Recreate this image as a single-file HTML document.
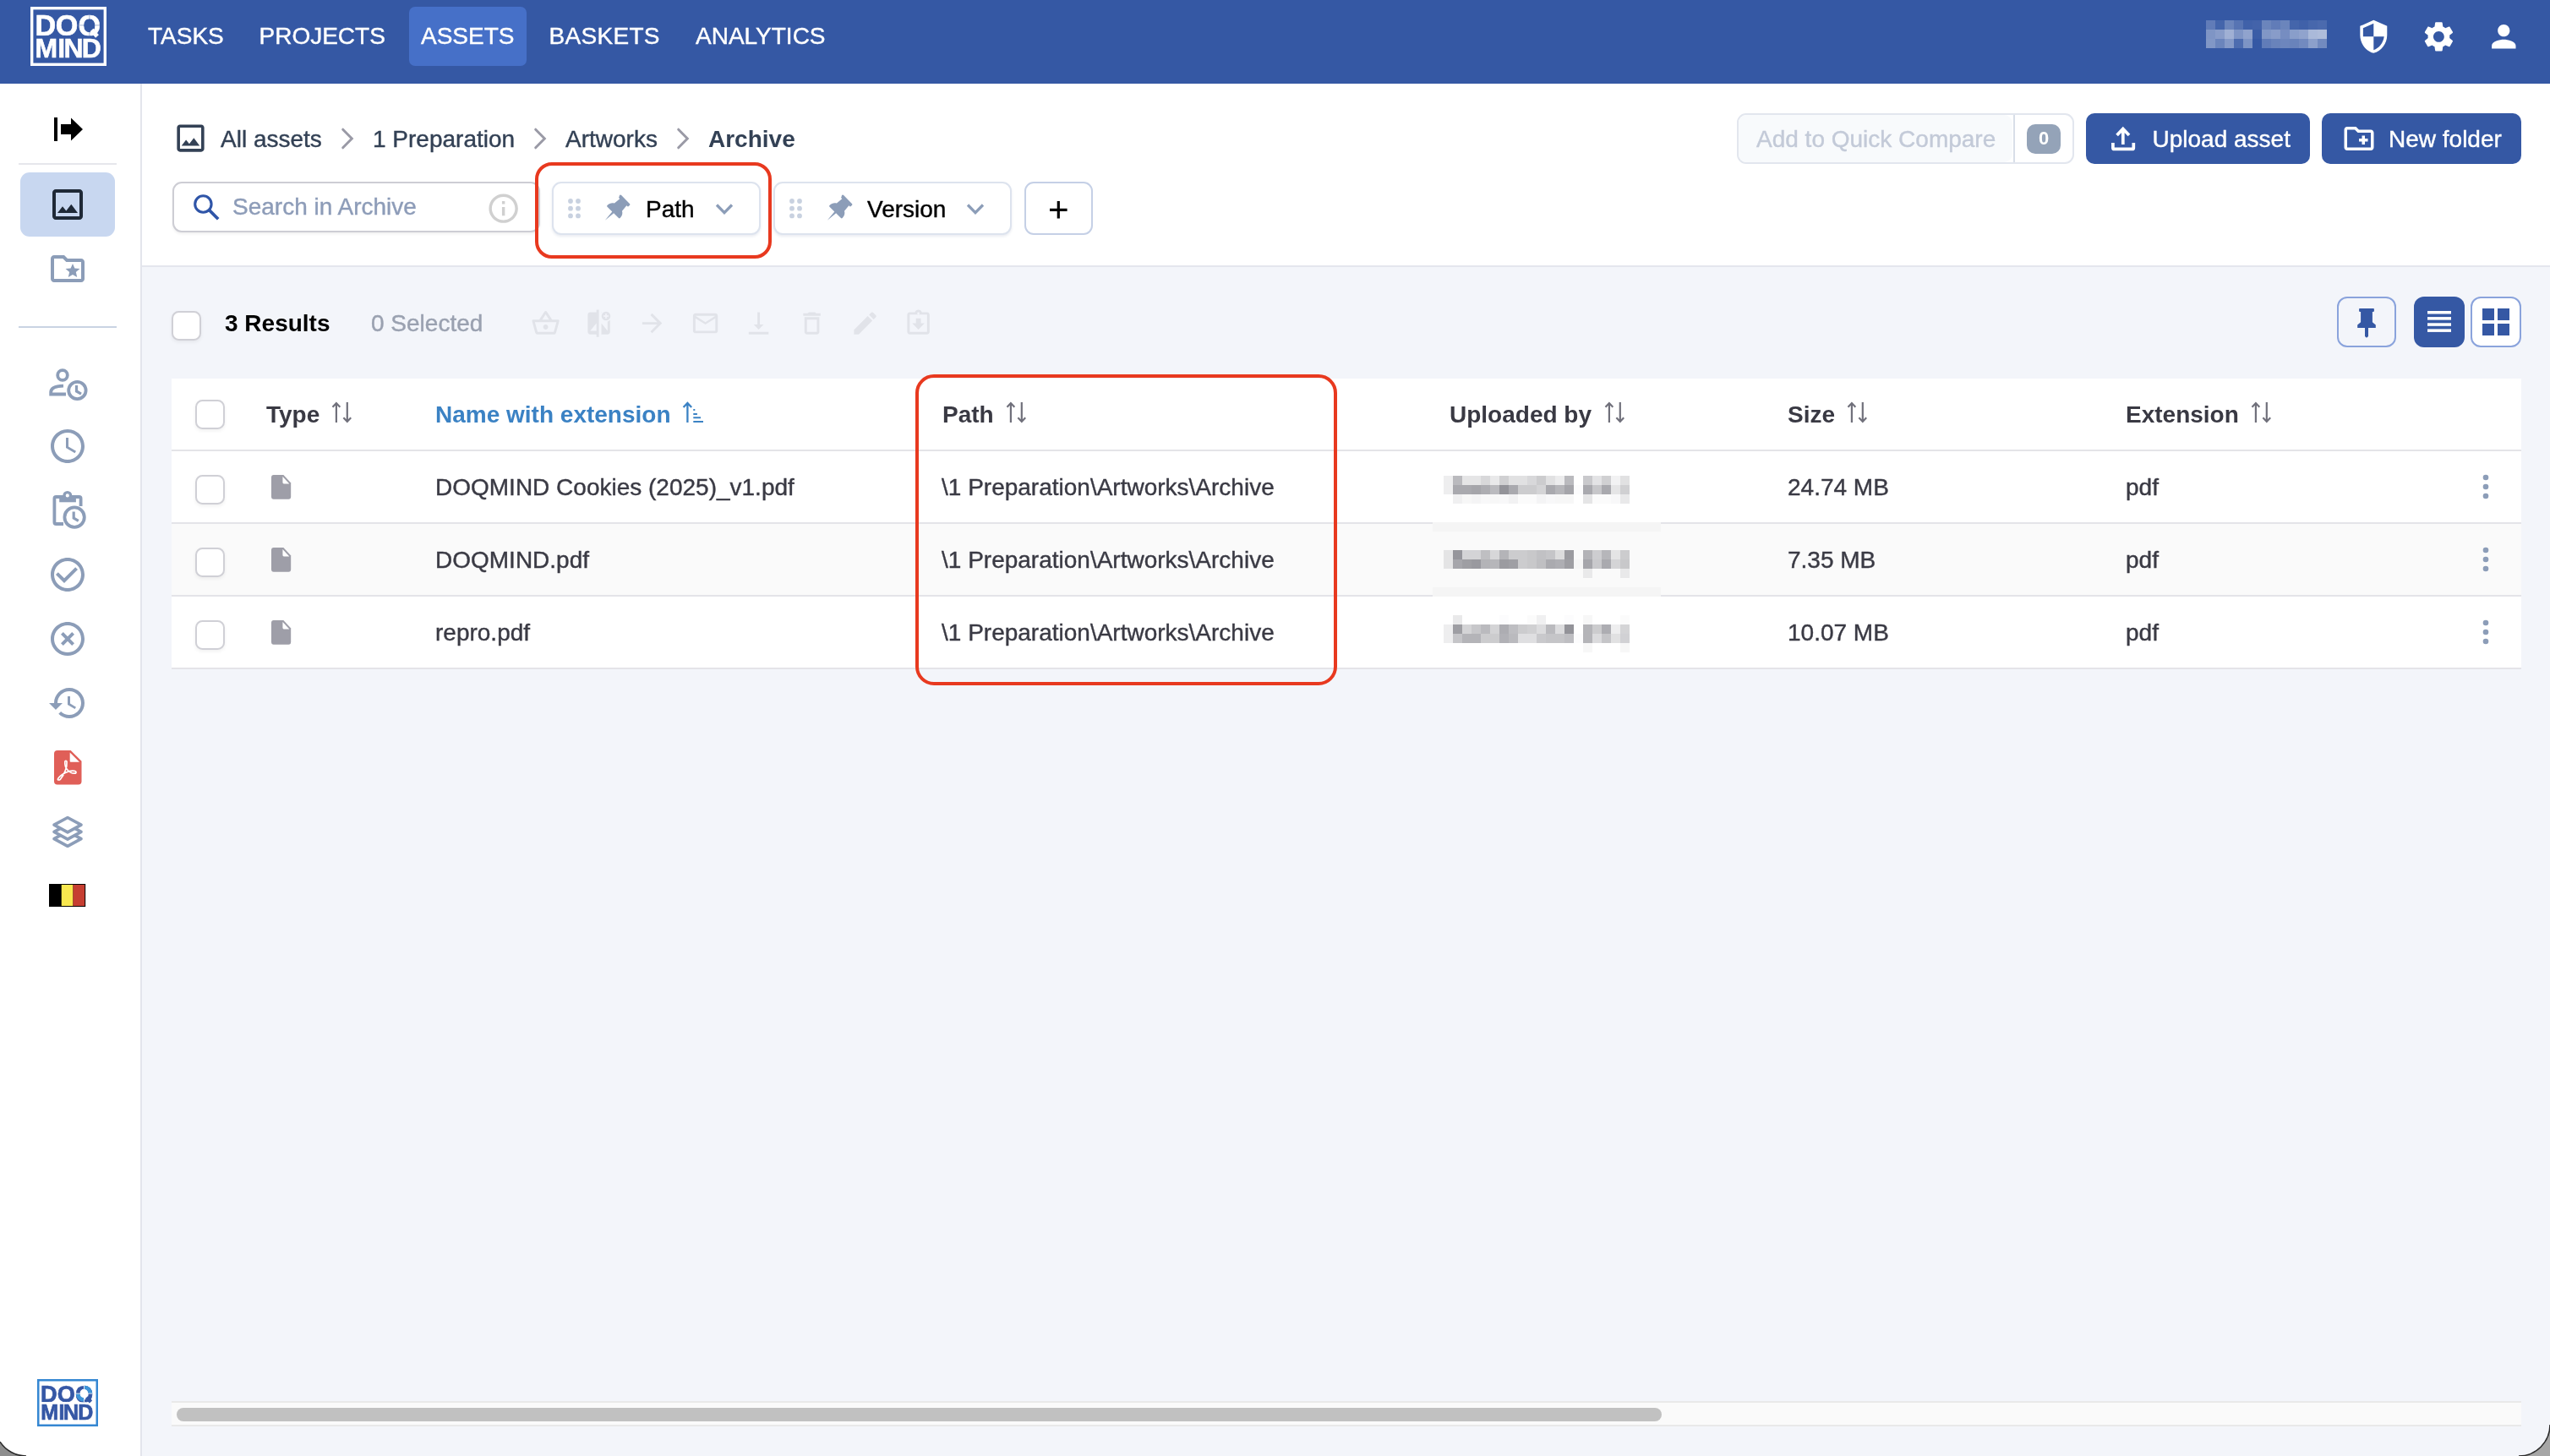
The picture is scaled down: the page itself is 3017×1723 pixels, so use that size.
<!DOCTYPE html>
<html lang="en">
<head>
<meta charset="utf-8">
<title>DOQMIND Assets</title>
<style>
*{box-sizing:border-box;margin:0;padding:0}
html,body{width:3017px;height:1723px;overflow:hidden;background:#f3f5fa}
body{position:relative;will-change:transform;font-family:"Liberation Sans",Arial,sans-serif;font-size:28px;line-height:32px;color:#3a3a44}
.a{position:absolute}
.t{position:absolute;white-space:nowrap;font-size:28px;line-height:32px}
.t{-webkit-text-stroke:.400px currentColor}
.b{font-weight:bold;-webkit-text-stroke:0}
svg{position:absolute;overflow:visible}
#hdr{left:0;top:0;width:3017px;height:99px;background:#3558a4}
#hdr .t{color:#fff}
#side{left:0;top:99px;width:168px;height:1624px;background:#fff;border-right:2px solid #e3e5ec}
#tool{left:168px;top:99px;width:2849px;height:217px;background:#fff;border-bottom:2px solid #e4e6ee}
.cb{position:absolute;width:35px;height:35px;border:2px solid #d0d0d6;border-radius:8.500px;background:#fff;box-shadow:0 2px 4px rgba(0,0,0,.06)}
.chip{position:absolute;height:63px;border:2px solid #dde3ee;border-radius:11px;background:#fff;box-shadow:0 2px 3px rgba(60,80,130,.10)}
.btn{position:absolute;height:60px;border-radius:10px;background:#3558a4}
.row{position:absolute;left:203px;width:2780px;border-bottom:2px solid #e4e4e8;background:#fff}
.hl{position:absolute;border:4px solid #e8391f;border-radius:22px}
</style>
</head>
<body>

<!-- ================= HEADER ================= -->
<div id="hdr" class="a">
  <svg style="left:36px;top:8px" width="90" height="70" viewBox="0 0 90 70">
    <defs><clipPath id="qc1"><rect x="0" y="0" width="90" height="34.300"/></clipPath></defs>
    <rect x="1.700" y="1.700" width="86.600" height="66.600" fill="none" stroke="#fff" stroke-width="3.400"/>
    <text clip-path="url(#qc1)" x="5.500 29.800 56.600" y="33.500" font-family="Liberation Sans, sans-serif" font-weight="bold" font-size="34.200" fill="#fff" stroke="#fff" stroke-width=".600">DOQ</text>
    <path d="M72.500 27.500l6.500 7.500" stroke="#fff" stroke-width="5" fill="none"/>
    <path d="M69.800 9.500v6M69.800 28v6M58 21.800h6M76 21.800h6" stroke="#3558a4" stroke-opacity=".35" stroke-width="1.200" fill="none"/>
    <text x="5.600 32.300 39.400 60.700" y="60.100" font-family="Liberation Sans, sans-serif" font-weight="bold" font-size="32" fill="#fff" stroke="#fff" stroke-width=".600">MIND</text>
  </svg>
  <div class="a" style="left:484px;top:8px;width:139px;height:70px;border-radius:7px;background:#4670c8"></div>
  <div class="t" style="left:175px;top:27px">TASKS</div>
  <div class="t" style="left:306.500px;top:27px">PROJECTS</div>
  <div class="t" style="left:498px;top:27px">ASSETS</div>
  <div class="t" style="left:649.500px;top:27px;letter-spacing:.3px">BASKETS</div>
  <div class="t" style="left:823px;top:27px">ANALYTICS</div>

  <!-- blurred user name -->
  <svg id="uname" style="left:2610px;top:24px" width="143" height="33" viewBox="0 0 143 33" shape-rendering="crispEdges">
    <rect x="0" y="0" width="11" height="11" fill="#fff" fill-opacity="0.22"/>
    <rect x="11" y="0" width="11" height="11" fill="#fff" fill-opacity="0.08"/>
    <rect x="22" y="0" width="11" height="11" fill="#fff" fill-opacity="0.27"/>
    <rect x="33" y="0" width="11" height="11" fill="#fff" fill-opacity="0.17"/>
    <rect x="44" y="0" width="11" height="11" fill="#fff" fill-opacity="0.06"/>
    <rect x="55" y="0" width="11" height="11" fill="#fff" fill-opacity="0.07"/>
    <rect x="66" y="0" width="11" height="11" fill="#fff" fill-opacity="0.27"/>
    <rect x="77" y="0" width="11" height="11" fill="#fff" fill-opacity="0.22"/>
    <rect x="88" y="0" width="11" height="11" fill="#fff" fill-opacity="0.27"/>
    <rect x="99" y="0" width="11" height="11" fill="#fff" fill-opacity="0.08"/>
    <rect x="110" y="0" width="11" height="11" fill="#fff" fill-opacity="0.06"/>
    <rect x="121" y="0" width="11" height="11" fill="#fff" fill-opacity="0.09"/>
    <rect x="132" y="0" width="11" height="11" fill="#fff" fill-opacity="0.11"/>
    <rect x="0" y="11" width="11" height="11" fill="#fff" fill-opacity="0.37"/>
    <rect x="11" y="11" width="11" height="11" fill="#fff" fill-opacity="0.41"/>
    <rect x="22" y="11" width="11" height="11" fill="#fff" fill-opacity="0.53"/>
    <rect x="33" y="11" width="11" height="11" fill="#fff" fill-opacity="0.37"/>
    <rect x="44" y="11" width="11" height="11" fill="#fff" fill-opacity="0.45"/>
    <rect x="55" y="11" width="11" height="11" fill="#fff" fill-opacity="0.03"/>
    <rect x="66" y="11" width="11" height="11" fill="#fff" fill-opacity="0.38"/>
    <rect x="77" y="11" width="11" height="11" fill="#fff" fill-opacity="0.41"/>
    <rect x="88" y="11" width="11" height="11" fill="#fff" fill-opacity="0.32"/>
    <rect x="99" y="11" width="11" height="11" fill="#fff" fill-opacity="0.42"/>
    <rect x="110" y="11" width="11" height="11" fill="#fff" fill-opacity="0.45"/>
    <rect x="121" y="11" width="11" height="11" fill="#fff" fill-opacity="0.58"/>
    <rect x="132" y="11" width="11" height="11" fill="#fff" fill-opacity="0.60"/>
    <rect x="0" y="22" width="11" height="11" fill="#fff" fill-opacity="0.38"/>
    <rect x="11" y="22" width="11" height="11" fill="#fff" fill-opacity="0.27"/>
    <rect x="22" y="22" width="11" height="11" fill="#fff" fill-opacity="0.40"/>
    <rect x="33" y="22" width="11" height="11" fill="#fff" fill-opacity="0.12"/>
    <rect x="44" y="22" width="11" height="11" fill="#fff" fill-opacity="0.36"/>
    <rect x="66" y="22" width="11" height="11" fill="#fff" fill-opacity="0.22"/>
    <rect x="77" y="22" width="11" height="11" fill="#fff" fill-opacity="0.26"/>
    <rect x="88" y="22" width="11" height="11" fill="#fff" fill-opacity="0.28"/>
    <rect x="99" y="22" width="11" height="11" fill="#fff" fill-opacity="0.26"/>
    <rect x="110" y="22" width="11" height="11" fill="#fff" fill-opacity="0.30"/>
    <rect x="121" y="22" width="11" height="11" fill="#fff" fill-opacity="0.43"/>
    <rect x="132" y="22" width="11" height="11" fill="#fff" fill-opacity="0.30"/>
  </svg>
  <!-- shield -->
  <svg style="left:2786.7px;top:21.7px" width="42.6" height="42.6" viewBox="0 0 24 24"><path fill="#fff" d="M12 1L3 5v6c0 5.550 3.840 10.740 9 12 5.160-1.260 9-6.450 9-12V5l-9-4zm0 10.990h7c-.530 4.120-3.280 7.790-7 8.940V12H5V6.300l7-3.110v8.800z"/></svg>
  <!-- gear -->
  <svg style="left:2863.5px;top:21.5px" width="42.800" height="42.800" viewBox="0 0 24 24"><path fill="#fff" d="M19.140 12.940c.040-.300.060-.610.060-.940 0-.320-.020-.640-.070-.940l2.030-1.580c.180-.140.230-.410.120-.610l-1.920-3.320c-.120-.220-.370-.290-.590-.220l-2.390.960c-.500-.380-1.030-.700-1.620-.940l-.360-2.540c-.040-.240-.240-.410-.480-.410h-3.840c-.240 0-.430.170-.470.410l-.360 2.540c-.590.240-1.130.570-1.620.940l-2.390-.960c-.220-.080-.470 0-.590.220L2.740 8.870c-.120.210-.080.470.120.610l2.030 1.580c-.050.300-.090.630-.090.940s.020.640.070.940l-2.030 1.580c-.180.140-.230.410-.120.610l1.920 3.320c.120.220.370.290.590.220l2.390-.960c.500.380 1.030.700 1.620.940l.360 2.540c.050.240.240.410.480.410h3.840c.240 0 .440-.170.470-.410l.360-2.540c.590-.240 1.130-.560 1.620-.940l2.390.960c.220.080.470 0 .590-.220l1.920-3.320c.120-.220.070-.470-.120-.610l-2.010-1.580zM12 15.600c-1.980 0-3.600-1.620-3.600-3.600s1.620-3.600 3.600-3.600 3.600 1.620 3.600 3.600-1.620 3.600-3.600 3.600z"/></svg>
  <!-- person -->
  <svg style="left:2940.5px;top:21.7px" width="42.6" height="42.6" viewBox="0 0 24 24"><path fill="#fff" d="M12 12c2.210 0 4-1.790 4-4s-1.790-4-4-4-4 1.790-4 4 1.790 4 4 4zm0 2c-2.670 0-8 1.340-8 4v2h16v-2c0-2.660-5.330-4-8-4z"/></svg>
</div>

<!-- ================= SIDEBAR ================= -->
<div id="side" class="a">
  <!-- collapse arrow -->
  <svg style="left:60px;top:36px" width="44" height="36" viewBox="0 0 44 36"><rect x="4" y="4" width="4" height="28" fill="#000"/><path fill="#000" d="M12 12h12V4.500L38 18 24 31.500V24H12z"/></svg>
  <div class="a" style="left:22px;top:94px;width:116px;height:2px;background:#e6e7ec"></div>
  <!-- active: assets -->
  <div class="a" style="left:24px;top:105px;width:112px;height:76px;border-radius:11px;background:#c8d7f0"></div>
  <svg style="left:56px;top:119px" width="48" height="48" viewBox="0 0 24 24"><path fill="#1f2937" d="M19 5v14H5V5h14m0-2H5c-1.100 0-2 .900-2 2v14c0 1.100.900 2 2 2h14c1.100 0 2-.900 2-2V5c0-1.100-.900-2-2-2zm-4.860 8.860l-3 3.870L9 13.140 6 17h12l-3.860-5.140z"/></svg>
  <!-- folder special -->
  <svg style="left:56px;top:195px" width="48" height="48" viewBox="0 0 24 24"><path fill="#8c9db8" d="M20 6h-8l-2-2H4c-1.100 0-2 .900-2 2v12c0 1.100.900 2 2 2h16c1.100 0 2-.900 2-2V8c0-1.100-.900-2-2-2zm0 12H4V6h5.170l2 2H20v10zm-6.920-3.960L12.390 17 15 15.470 17.610 17l-.690-2.960 2.300-1.990-3.030-.260L15 9l-1.190 2.790-3.030.260z"/></svg>
  <div class="a" style="left:22px;top:286.500px;width:116px;height:2px;background:#c9d3e3"></div>
  <!-- person + clock -->
  <svg style="left:56px;top:334.200px" width="52" height="46" viewBox="0 0 52 46" fill="none" stroke="#8c9db8" stroke-width="3.800">
    <circle cx="18" cy="11" r="5.800"/>
    <path d="M22 33.500H4.200v-2.500C4.200 26 11 23.800 19 23.600"/>
    <circle cx="35.400" cy="29" r="10.200"/>
    <path d="M34.500 23v7l5.500 3.200" stroke-width="3.200"/>
  </svg>
  <!-- clock -->
  <svg style="left:56px;top:405px" width="48" height="48" viewBox="0 0 24 24"><path fill="#8c9db8" d="M11.990 2C6.470 2 2 6.480 2 12s4.470 10 9.990 10C17.520 22 22 17.520 22 12S17.520 2 11.990 2zM12 20c-4.420 0-8-3.580-8-8s3.580-8 8-8 8 3.580 8 8-3.580 8-8 8zm.5-13H11v6l5.250 3.150.750-1.230-4.500-2.670z"/></svg>
  <!-- clipboard + clock -->
  <svg style="left:58px;top:480px" width="48" height="48" viewBox="0 0 48 48" fill="none" stroke="#8c9db8" stroke-width="3.800">
    <path d="M17 41H8.400a2 2 0 0 1-2-2V11a2 2 0 0 1 2-2h27.200a2 2 0 0 1 2 2v9"/>
    <path d="M12.200 8.500h19.700v6.800H12.200z" fill="#8c9db8" stroke="none"/>
    <circle cx="21.800" cy="7.400" r="3.800" fill="#fff" stroke-width="3.400"/>
    <circle cx="30.100" cy="33.100" r="11.700" fill="#fff"/>
    <path d="M29.200 26.500v7.500l5.600 3.400" stroke-width="3.200"/>
  </svg>
  <!-- check circle -->
  <svg style="left:56px;top:556.500px" width="48" height="48" viewBox="0 0 24 24"><path fill="#8c9db8" d="M16.590 7.580L10 14.170l-3.590-3.580L5 12l5 5 8-8zM12 2C6.480 2 2 6.480 2 12s4.480 10 10 10 10-4.480 10-10S17.520 2 12 2zm0 18c-4.420 0-8-3.580-8-8s3.580-8 8-8 8 3.580 8 8-3.580 8-8 8z"/></svg>
  <!-- x circle -->
  <svg style="left:56px;top:633px" width="48" height="48" viewBox="0 0 24 24"><path fill="#8c9db8" d="M14.590 8L12 10.590 9.410 8 8 9.410 10.590 12 8 14.590 9.410 16 12 13.410 14.590 16 16 14.590 13.410 12 16 9.410 14.590 8zM12 2C6.470 2 2 6.470 2 12s4.470 10 10 10 10-4.470 10-10S17.530 2 12 2zm0 18c-4.410 0-8-3.590-8-8s3.590-8 8-8 8 3.590 8 8-3.590 8-8 8z"/></svg>
  <!-- history -->
  <svg style="left:56px;top:709px" width="48" height="48" viewBox="0 0 24 24"><path fill="#8c9db8" d="M13 3c-4.970 0-9 4.030-9 9H1l3.890 3.890.070.140L9 12H6c0-3.870 3.130-7 7-7s7 3.130 7 7-3.130 7-7 7c-1.930 0-3.680-.790-4.940-2.060l-1.420 1.420C8.270 19.990 10.510 21 13 21c4.970 0 9-4.030 9-9s-4.030-9-9-9zm-1 5v5l4.280 2.540.720-1.210-3.500-2.080V8H12z"/></svg>
  <!-- pdf -->
  <svg style="left:63.800px;top:789px" width="32.500" height="40.400" viewBox="0 0 33 41">
    <path fill="#e05f58" d="M4 0h16l13 13v24a4 4 0 0 1-4 4H4a4 4 0 0 1-4-4V4a4 4 0 0 1 4-4z"/>
    <path fill="#fff" d="M19 2.500v10.500a1 1 0 0 0 1 1h10.500z"/>
    <path fill="none" stroke="#fff" stroke-width="1.700" stroke-linecap="round" stroke-linejoin="round" d="M4.500 34.500c1.500-3 5-5.500 9-7.500 3.500-1.800 8-2.800 11-2.200 2.500.6 2.600 2.600.400 2.800-3 .200-6.800-1.700-9.300-4.800-2-2.500-2.800-6-2.600-9 .100-1.800 2.100-1.900 2.300 0 .300 3-.400 7-2 11-1.400 3.600-3.500 7.500-5.700 9.800-1.500 1.500-3.600 1-3.100-.100z"/>
  </svg>
  <!-- layers -->
  <svg style="left:60px;top:864.700px" width="40" height="42" viewBox="0 0 40 42" fill="#fff" stroke="#8c9db8" stroke-width="3.600" stroke-linejoin="round">
    <path d="M20 19.9L36 28.6 20 37.3 4 28.6z"/>
    <path d="M20 11.7L36 20.4 20 29.1 4 20.4z"/>
    <path d="M20 3.5L36 12.2 20 20.9 4 12.2z"/>
  </svg>
  <!-- flag -->
  <svg style="left:58.400px;top:946.600px" width="43.200" height="27" viewBox="0 0 44 28" preserveAspectRatio="none"><rect x="0" y="0" width="44" height="28" fill="#000"/><rect x="15" y="1" width="14" height="26" fill="#f9e84f"/><rect x="29" y="1" width="14" height="26" fill="#c63e31"/></svg>
  <!-- bottom logo -->
  <svg style="left:44px;top:1533px" width="72" height="56" viewBox="0 0 72 56">
    <defs><clipPath id="qc2"><rect x="0" y="0" width="72" height="27.200"/></clipPath></defs>
    <rect x="1.250" y="1.250" width="69.500" height="53.500" fill="#fff" stroke="#3587d2" stroke-width="2.500"/>
    <text clip-path="url(#qc2)" x="4.100 23.800 45" y="26.500" font-family="Liberation Sans, sans-serif" font-weight="bold" font-size="27.200" fill="#3557a5" stroke="#3557a5" stroke-width=".700">DOQ</text>
    <path d="M55.500 9.700A7.400 7.400 0 0 1 62.900 17.100M55.500 24.500A7.400 7.400 0 0 1 48.100 17.100" fill="none" stroke="#3d94d8" stroke-width="4.600"/>
    <path d="M55.500 7v5.500M55.500 21.500v5.500M45.500 17.100h5.500M60 17.100h5.500" stroke="#fff" stroke-width=".800" fill="none"/>
    <path d="M58.500 21.500l5 5.500" stroke="#3557a5" stroke-width="4.400" fill="none"/>
    <text x="4.200 25.400 31 48.200" y="47.900" font-family="Liberation Sans, sans-serif" font-weight="bold" font-size="25" fill="#3557a5" stroke="#3557a5" stroke-width=".700">MIND</text>
  </svg>
</div>

<!-- ================= TOOLBAR ================= -->
<div id="tool" class="a"></div>

<!-- breadcrumb -->
<svg style="left:204.3px;top:142.3px" width="43" height="43" viewBox="0 0 24 24"><path fill="#334155" d="M19 5v14H5V5h14m0-2H5c-1.100 0-2 .900-2 2v14c0 1.100.900 2 2 2h14c1.100 0 2-.900 2-2V5c0-1.100-.900-2-2-2zm-4.860 8.860l-3 3.870L9 13.140 6 17h12l-3.860-5.140z"/></svg>
<div class="t" style="left:261px;top:149px;color:#334155">All assets</div>
<svg style="left:403px;top:151px" width="16" height="26" viewBox="0 0 16 26" fill="none" stroke="#9a9aa6" stroke-width="3" stroke-linecap="round"><path d="M2.700 2.200L13.300 13 2.700 23.800"/></svg>
<div class="t" style="left:441px;top:149px;color:#334155">1 Preparation</div>
<svg style="left:631px;top:151px" width="16" height="26" viewBox="0 0 16 26" fill="none" stroke="#9a9aa6" stroke-width="3" stroke-linecap="round"><path d="M2.700 2.200L13.300 13 2.700 23.800"/></svg>
<div class="t" style="left:669px;top:149px;color:#334155">Artworks</div>
<svg style="left:800px;top:151px" width="16" height="26" viewBox="0 0 16 26" fill="none" stroke="#9a9aa6" stroke-width="3" stroke-linecap="round"><path d="M2.700 2.200L13.300 13 2.700 23.800"/></svg>
<div class="t b" style="left:838px;top:149px;color:#334155">Archive</div>

<!-- quick compare / buttons -->
<div class="a" style="left:2055px;top:134px;width:399px;height:60px;border:2px solid #e2e6ee;border-radius:11px;background:#fff;overflow:hidden">
  <div class="a" style="left:0;top:0;width:324px;height:56px;background:#f8fafc;border-radius:0 10px 10px 0"></div>
  <div class="a" style="left:325px;top:0;width:2px;height:56px;background:#d8dee8"></div>
</div>
<div class="t" style="left:2078px;top:148.700px;color:#c3cad8">Add to Quick Compare</div>
<div class="a" style="left:2398px;top:147px;width:40px;height:35px;border-radius:10px;background:#94a3b8"></div>
<div class="t b" style="left:2398px;top:149px;width:40px;text-align:center;color:#fff;font-size:22px;line-height:30px">0</div>
<div class="btn" style="left:2468px;top:134px;width:265px"></div>
<svg style="left:2496px;top:146px" width="32" height="34" viewBox="0 0 32 34" fill="none" stroke="#fff" stroke-width="3.700"><path d="M3.900 22.900v6a1.500 1.500 0 0 0 1.500 1.500h21.400a1.500 1.500 0 0 0 1.500-1.500v-6"/><path d="M15.800 25.100V7.500M8.600 14l7.200-7.600 7.200 7.600"/></svg>
<div class="t" style="left:2546.500px;top:148.500px;color:#fff">Upload asset</div>
<div class="btn" style="left:2747px;top:134px;width:236px"></div>
<svg style="left:2770px;top:143px" width="42" height="42" viewBox="0 0 24 24"><path fill="#fff" d="M20 6h-8l-2-2H4c-1.110 0-1.990.890-1.990 2L2 18c0 1.110.890 2 2 2h16c1.110 0 2-.890 2-2V8c0-1.110-.890-2-2-2zm0 12H4V6h5.170l2 2H20v10zm-8-4h2v2h2v-2h2v-2h-2v-2h-2v2h-2z"/></svg>
<div class="t" style="left:2826px;top:148.500px;color:#fff">New folder</div>

<!-- search -->
<div class="a" style="left:203.500px;top:215px;width:435px;height:60px;border:2px solid #cdcdd4;border-radius:11px;background:#fff;box-shadow:0 2px 3px rgba(0,0,0,.06)"></div>
<svg style="left:226px;top:227px" width="38" height="38" viewBox="0 0 38 38" fill="none" stroke="#2f55a8"><circle cx="14.400" cy="14.500" r="9.700" stroke-width="3.100"/><path d="M21.300 21.400L32.200 32.300" stroke-width="3.700"/></svg>
<div class="t" style="left:275px;top:229px;color:#8d9cb8">Search in Archive</div>
<svg style="left:574.500px;top:226.100px" width="41.300" height="41.300" viewBox="0 0 24 24"><path fill="#d0d0d0" d="M11 7h2v2h-2zm0 4h2v6h-2zm1-9C6.480 2 2 6.480 2 12s4.480 10 10 10 10-4.480 10-10S17.520 2 12 2zm0 18c-4.410 0-8-3.590-8-8s3.590-8 8-8 8 3.590 8 8-3.590 8-8 8z"/></svg>

<!-- chips -->
<div class="chip" style="left:653px;top:215px;width:247px"></div>
<svg class="dots" style="left:671.9px;top:234.800px" width="15" height="24" viewBox="0 0 15 24" fill="#c8d1e0"><circle cx="3" cy="3" r="2.900"/><circle cx="12" cy="3" r="2.900"/><circle cx="3" cy="11.700" r="2.900"/><circle cx="12" cy="11.700" r="2.900"/><circle cx="3" cy="20.400" r="2.900"/><circle cx="12" cy="20.400" r="2.900"/></svg>
<svg style="left:740.3px;top:236.3px" width="1" height="1"><g transform="rotate(45) scale(1.000)"><path fill="#8c9db8" d="M-8.400 1.500a1.500 1.500 0 0 1 1.500-1.500h13.800a1.500 1.500 0 0 1 1.500 1.500v1.200a1.500 1.500 0 0 1-1.500 1.500h-.800l.700 8.300c2.600 1.300 4.300 4 4.300 7.600a1.200 1.200 0 0 1-1.200 1.200h-8.200l-1.300 13.300-1.300-13.300h-8.200a1.200 1.200 0 0 1-1.200-1.200c0-3.600 1.700-6.300 4.300-7.600l.700-8.300h-.800a1.500 1.500 0 0 1-1.500-1.500z"/></g></svg>
<div class="t" style="left:764px;top:232px;color:#000">Path</div>
<svg style="left:846px;top:240px" width="22" height="15" viewBox="0 0 22 15" fill="none" stroke="#8c9db8" stroke-width="3.300"><path d="M2 2.500L11 11.700 20 2.500"/></svg>

<div class="chip" style="left:915px;top:215px;width:282px"></div>
<svg class="dots" style="left:933.600px;top:234.800px" width="15" height="24" viewBox="0 0 15 24" fill="#c8d1e0"><circle cx="3" cy="3" r="2.900"/><circle cx="12" cy="3" r="2.900"/><circle cx="3" cy="11.700" r="2.900"/><circle cx="12" cy="11.700" r="2.900"/><circle cx="3" cy="20.400" r="2.900"/><circle cx="12" cy="20.400" r="2.900"/></svg>
<svg style="left:1003.0px;top:236.3px" width="1" height="1"><g transform="rotate(45) scale(1.000)"><path fill="#8c9db8" d="M-8.400 1.500a1.500 1.500 0 0 1 1.500-1.500h13.800a1.500 1.500 0 0 1 1.500 1.500v1.200a1.500 1.500 0 0 1-1.500 1.500h-.800l.700 8.300c2.600 1.300 4.300 4 4.300 7.600a1.200 1.200 0 0 1-1.200 1.200h-8.200l-1.300 13.300-1.300-13.300h-8.200a1.200 1.200 0 0 1-1.200-1.200c0-3.600 1.700-6.300 4.300-7.600l.700-8.300h-.800a1.500 1.500 0 0 1-1.500-1.500z"/></g></svg>
<div class="t" style="left:1026px;top:232px;color:#000">Version</div>
<svg style="left:1143px;top:240px" width="22" height="15" viewBox="0 0 22 15" fill="none" stroke="#8c9db8" stroke-width="3.300"><path d="M2 2.500L11 11.700 20 2.500"/></svg>

<div class="a" style="left:1212px;top:215px;width:81px;height:63px;border:2px solid #c5d0e6;border-radius:11px;background:#fff"></div>
<svg style="left:1242.300px;top:237.500px" width="20.600" height="20.600" viewBox="0 0 20.600 20.600" stroke="#000" stroke-width="3.200"><path d="M10.300 0v20.600M0 10.300h20.600"/></svg>

<!-- red highlight 1 -->
<div class="hl" style="left:633px;top:192px;width:280px;height:114px;border-radius:20px"></div>

<!-- ================= RESULTS BAR ================= -->
<div class="cb" style="left:203px;top:368px"></div>
<div class="t b" style="left:266px;top:367px;color:#000">3 Results</div>
<div class="t" style="left:439px;top:367px;color:#9aa1b0">0 Selected</div>
<svg style="left:627.9px;top:364.8px" width="35.2" height="35.2" viewBox="0 0 24 24"><path fill="#e1e3e9" d="M22 9h-4.790l-4.380-6.560c-.190-.280-.510-.420-.830-.420s-.640.140-.830.430L6.790 9H2c-.550 0-1 .450-1 1 0 .090.010.180.040.270l2.540 9.270c.230.840 1 1.460 1.920 1.460h13c.920 0 1.690-.620 1.930-1.460l2.540-9.270L23 10c0-.550-.450-1-1-1zM12 4.800L14.800 9H9.200L12 4.800zM18.500 19l-12.990.010L3.310 11H20.700l-2.200 8zM12 13c-1.100 0-2 .900-2 2s.900 2 2 2 2-.900 2-2-.900-2-2-2z"/></svg>
<svg style="left:690.7px;top:364.9px" width="35.2" height="35.2" viewBox="0 0 24 24"><path fill="#e1e3e9" d="M10 3H5c-1.100 0-2 .900-2 2v14c0 1.100.900 2 2 2h5v2h2V1h-2v2zm0 15H5l5-6v6zm9-15h-5v2h5v13l-5-6v9h5c1.100 0 2-.900 2-2V5c0-1.100-.900-2-2-2z"/></svg>
<svg style="left:710px;top:367px" width="14" height="14" viewBox="0 0 14 14"><circle cx="7" cy="7" r="6" fill="#e1e3e9" stroke="#f3f5fa" stroke-width="1.400"/><path d="M7 4v6M4 7h6" stroke="#f3f5fa" stroke-width="1.500"/></svg>
<svg style="left:753.9px;top:364.9px" width="35.2" height="35.2" viewBox="0 0 24 24"><path fill="#e1e3e9" d="M12 4l-1.410 1.410L16.170 11H4v2h12.170l-5.580 5.590L12 20l8-8z"/></svg>
<svg style="left:816.9px;top:364.8px" width="35.2" height="35.2" viewBox="0 0 24 24"><path fill="#e1e3e9" d="M20 4H4c-1.100 0-1.990.900-1.990 2L2 18c0 1.100.900 2 2 2h16c1.100 0 2-.900 2-2V6c0-1.100-.900-2-2-2zm0 14H4V8l8 5 8-5v10zm-8-7L4 6h16l-8 5z"/></svg>
<svg style="left:879.8px;top:364.8px" width="35.2" height="35.2" viewBox="0 0 24 24"><path fill="#e1e3e9" d="M16 13h-3V3h-2v10H8l4 4 4-4zM4 19v2h16v-2H4z"/></svg>
<svg style="left:942.9px;top:364.8px" width="35.2" height="35.2" viewBox="0 0 24 24"><path fill="#e1e3e9" d="M6 19c0 1.100.900 2 2 2h8c1.100 0 2-.900 2-2V7H6v12zM8 9h8v10H8V9zm7.500-5l-1-1h-5l-1 1H5v2h14V4z"/></svg>
<svg style="left:1005.6px;top:364.8px" width="35.2" height="35.2" viewBox="0 0 24 24"><path fill="#e1e3e9" d="M3 17.250V21h3.750L17.810 9.940l-3.750-3.750L3 17.250zM20.710 7.040c.390-.390.390-1.020 0-1.410l-2.340-2.340c-.390-.390-1.020-.390-1.410 0l-1.830 1.830 3.750 3.750 1.830-1.830z"/></svg>
<svg style="left:1068.7px;top:365.0px" width="35.2" height="35.2" viewBox="0 0 24 24"><path fill="#e1e3e9" d="M19 3h-4.180C14.400 1.840 13.300 1 12 1c-1.300 0-2.400.840-2.820 2H5c-1.100 0-2 .900-2 2v14c0 1.100.900 2 2 2h14c1.100 0 2-.900 2-2V5c0-1.100-.900-2-2-2zm-7 0c.550 0 1 .450 1 1s-.450 1-1 1-1-.450-1-1 .450-1 1-1zm7 16H5V5h14v14zm-7-2l5-5h-3V8h-4v4H7z"/></svg>

<!-- view buttons -->
<div class="a" style="left:2765px;top:351px;width:70px;height:60px;border:2px solid #8aa3dc;border-radius:12px"></div>
<svg style="left:2799.900px;top:365px" width="1" height="1"><path fill="#3558a4" d="M-8.900 .800a.800 .800 0 0 1 .800-.800h16.200a.800 .800 0 0 1 .800 .800v2.300a.800 .800 0 0 1-.800 .800h-1.200v12.300l3.900 3.400v3.400h-8.800v10l-2 1.800-2-1.800v-10h-8.800v-3.400l3.900-3.400v-12.300h-1.200a.800 .800 0 0 1-.800-.800z"/></svg>
<div class="a" style="left:2856px;top:351px;width:60px;height:60px;border-radius:12px;background:#3558a4"></div>
<svg style="left:2872px;top:368.200px" width="28" height="25" viewBox="0 0 28 25" fill="#fff"><rect x="0" y="0" width="28" height="3.500"/><rect x="0" y="7.100" width="28" height="3.500"/><rect x="0" y="14.300" width="28" height="3.500"/><rect x="0" y="21.400" width="28" height="3.500"/></svg>
<div class="a" style="left:2923px;top:351px;width:60px;height:60px;border:2px solid #8aa3dc;border-radius:12px;background:#fff"></div>
<svg style="left:2937px;top:365px" width="32" height="32" viewBox="0 0 32 32" fill="#3558a4"><rect x="0" y="0" width="14" height="14"/><rect x="18" y="0" width="14" height="14"/><rect x="0" y="18" width="14" height="14"/><rect x="18" y="18" width="14" height="14"/></svg>

<!-- ================= TABLE ================= -->
<div class="row" style="top:448px;height:86px"></div>
<div class="row" style="top:534px;height:86px"></div>
<div class="row" style="top:620px;height:86px;background:#fafafa"></div>
<div class="row" style="top:706px;height:86px"></div>
<div class="a" style="left:1695px;top:618px;width:270px;height:88px;background:#fafafa;border-top:11px solid #f5f5f5;border-bottom:11px solid #f5f5f5"></div>

<div class="cb" style="left:231px;top:473px"></div>
<div class="t b" style="left:315px;top:475px;color:#393943">Type</div>
<svg style="left:391.600px;top:474px" width="24" height="28" viewBox="0 0 24 28" fill="none" stroke="#70707b" stroke-width="2.200"><path d="M5.900 26V3.300M1.500 7.700l4.400-4.700 4.400 4.700M18.800 2v22.700M14.400 20.300l4.400 4.700 4.400-4.700"/></svg>
<div class="t b" style="left:515px;top:475px;color:#3b82c4">Name with extension</div>
<svg style="left:807px;top:474px" width="26" height="28" viewBox="0 0 26 28" fill="none" stroke="#3b82c4" stroke-width="2.300"><path d="M6.400 26V3.300M1.600 8l4.800-5 4.800 5"/><path stroke-width="2" d="M13.300 10.900h2M13.300 15.900h4.600M13.300 20.300h8.700M13.300 25h11.700"/></svg>
<div class="t b" style="left:1115px;top:475px;color:#393943">Path</div>
<svg style="left:1190.300px;top:474px" width="24" height="28" viewBox="0 0 24 28" fill="none" stroke="#70707b" stroke-width="2.200"><path d="M5.900 26V3.300M1.500 7.700l4.400-4.700 4.400 4.700M18.800 2v22.700M14.400 20.300l4.400 4.700 4.400-4.700"/></svg>
<div class="t b" style="left:1715px;top:475px;color:#393943">Uploaded by</div>
<svg style="left:1898.4px;top:474px" width="24" height="28" viewBox="0 0 24 28" fill="none" stroke="#70707b" stroke-width="2.200"><path d="M5.900 26V3.300M1.500 7.700l4.400-4.700 4.400 4.700M18.800 2v22.700M14.400 20.300l4.400 4.700 4.400-4.700"/></svg>
<div class="t b" style="left:2115px;top:475px;color:#393943">Size</div>
<svg style="left:2184.500px;top:474px" width="24" height="28" viewBox="0 0 24 28" fill="none" stroke="#70707b" stroke-width="2.200"><path d="M5.900 26V3.300M1.500 7.700l4.400-4.700 4.400 4.700M18.800 2v22.700M14.400 20.300l4.400 4.700 4.400-4.700"/></svg>
<div class="t b" style="left:2515px;top:475px;color:#393943">Extension</div>
<svg style="left:2663.4px;top:474px" width="24" height="28" viewBox="0 0 24 28" fill="none" stroke="#70707b" stroke-width="2.200"><path d="M5.900 26V3.300M1.500 7.700l4.400-4.700 4.400 4.700M18.800 2v22.700M14.400 20.300l4.400 4.700 4.400-4.700"/></svg>
<div class="cb" style="left:231px;top:562px"></div>
<svg style="left:320.900px;top:562px" width="23.200" height="28.800" viewBox="0 0 25 29" preserveAspectRatio="none"><path fill="#9e9ea8" d="M3 0h12.500L25 9.500V26a3 3 0 0 1-3 3H3a3 3 0 0 1-3-3V3a3 3 0 0 1 3-3z"/><path fill="#fff" d="M14.500 2v7a1.500 1.500 0 0 0 1.500 1.500h7z"/></svg>
<div class="t" style="left:515px;top:561px">DOQMIND Cookies (2025)_v1.pdf</div>
<div class="t" style="left:1114px;top:561px">\1 Preparation\Artworks\Archive</div>
<div class="t" style="left:2115px;top:561px">24.74 MB</div>
<div class="t" style="left:2515px;top:561px">pdf</div>
<svg style="left:2936px;top:561px" width="10" height="30" viewBox="0 0 10 30" fill="#8c9db8"><circle cx="5" cy="4" r="3.300"/><circle cx="5" cy="15" r="3.300"/><circle cx="5" cy="26" r="3.300"/></svg>
<div class="cb" style="left:231px;top:648px"></div>
<svg style="left:320.900px;top:648px" width="23.200" height="28.800" viewBox="0 0 25 29" preserveAspectRatio="none"><path fill="#9e9ea8" d="M3 0h12.500L25 9.500V26a3 3 0 0 1-3 3H3a3 3 0 0 1-3-3V3a3 3 0 0 1 3-3z"/><path fill="#fff" d="M14.500 2v7a1.500 1.500 0 0 0 1.500 1.500h7z"/></svg>
<div class="t" style="left:515px;top:647px">DOQMIND.pdf</div>
<div class="t" style="left:1114px;top:647px">\1 Preparation\Artworks\Archive</div>
<div class="t" style="left:2115px;top:647px">7.35 MB</div>
<div class="t" style="left:2515px;top:647px">pdf</div>
<svg style="left:2936px;top:647px" width="10" height="30" viewBox="0 0 10 30" fill="#8c9db8"><circle cx="5" cy="4" r="3.300"/><circle cx="5" cy="15" r="3.300"/><circle cx="5" cy="26" r="3.300"/></svg>
<div class="cb" style="left:231px;top:734px"></div>
<svg style="left:320.900px;top:734px" width="23.200" height="28.800" viewBox="0 0 25 29" preserveAspectRatio="none"><path fill="#9e9ea8" d="M3 0h12.500L25 9.500V26a3 3 0 0 1-3 3H3a3 3 0 0 1-3-3V3a3 3 0 0 1 3-3z"/><path fill="#fff" d="M14.500 2v7a1.500 1.500 0 0 0 1.500 1.500h7z"/></svg>
<div class="t" style="left:515px;top:733px">repro.pdf</div>
<div class="t" style="left:1114px;top:733px">\1 Preparation\Artworks\Archive</div>
<div class="t" style="left:2115px;top:733px">10.07 MB</div>
<div class="t" style="left:2515px;top:733px">pdf</div>
<svg style="left:2936px;top:733px" width="10" height="30" viewBox="0 0 10 30" fill="#8c9db8"><circle cx="5" cy="4" r="3.300"/><circle cx="5" cy="15" r="3.300"/><circle cx="5" cy="26" r="3.300"/></svg>

<!-- blurred uploader names -->
<svg style="left:1708px;top:563px" width="220" height="209" viewBox="0 0 220 209" shape-rendering="crispEdges" fill="#282834">
<rect x="0" y="0" width="11" height="11" fill-opacity="0.08"/>
<rect x="11" y="0" width="11" height="11" fill-opacity="0.32"/>
<rect x="22" y="0" width="11" height="11" fill-opacity="0.12"/>
<rect x="33" y="0" width="11" height="11" fill-opacity="0.12"/>
<rect x="44" y="0" width="11" height="11" fill-opacity="0.18"/>
<rect x="55" y="0" width="11" height="11" fill-opacity="0.10"/>
<rect x="66" y="0" width="11" height="11" fill-opacity="0.22"/>
<rect x="77" y="0" width="11" height="11" fill-opacity="0.14"/>
<rect x="88" y="0" width="11" height="11" fill-opacity="0.14"/>
<rect x="99" y="0" width="11" height="11" fill-opacity="0.18"/>
<rect x="110" y="0" width="11" height="11" fill-opacity="0.24"/>
<rect x="121" y="0" width="11" height="11" fill-opacity="0.14"/>
<rect x="132" y="0" width="11" height="11" fill-opacity="0.09"/>
<rect x="143" y="0" width="11" height="11" fill-opacity="0.32"/>
<rect x="165" y="0" width="11" height="11" fill-opacity="0.25"/>
<rect x="176" y="0" width="11" height="11" fill-opacity="0.13"/>
<rect x="187" y="0" width="11" height="11" fill-opacity="0.22"/>
<rect x="198" y="0" width="11" height="11" fill-opacity="0.06"/>
<rect x="209" y="0" width="11" height="11" fill-opacity="0.14"/>
<rect x="0" y="11" width="11" height="11" fill-opacity="0.08"/>
<rect x="11" y="11" width="11" height="11" fill-opacity="0.40"/>
<rect x="22" y="11" width="11" height="11" fill-opacity="0.40"/>
<rect x="33" y="11" width="11" height="11" fill-opacity="0.42"/>
<rect x="44" y="11" width="11" height="11" fill-opacity="0.38"/>
<rect x="55" y="11" width="11" height="11" fill-opacity="0.32"/>
<rect x="66" y="11" width="11" height="11" fill-opacity="0.50"/>
<rect x="77" y="11" width="11" height="11" fill-opacity="0.40"/>
<rect x="88" y="11" width="11" height="11" fill-opacity="0.24"/>
<rect x="99" y="11" width="11" height="11" fill-opacity="0.24"/>
<rect x="110" y="11" width="11" height="11" fill-opacity="0.20"/>
<rect x="121" y="11" width="11" height="11" fill-opacity="0.40"/>
<rect x="132" y="11" width="11" height="11" fill-opacity="0.34"/>
<rect x="143" y="11" width="11" height="11" fill-opacity="0.42"/>
<rect x="154" y="11" width="11" height="11" fill-opacity="0.01"/>
<rect x="165" y="11" width="11" height="11" fill-opacity="0.40"/>
<rect x="176" y="11" width="11" height="11" fill-opacity="0.26"/>
<rect x="187" y="11" width="11" height="11" fill-opacity="0.40"/>
<rect x="198" y="11" width="11" height="11" fill-opacity="0.12"/>
<rect x="209" y="11" width="11" height="11" fill-opacity="0.22"/>
<rect x="11" y="22" width="11" height="11" fill-opacity="0.07"/>
<rect x="22" y="22" width="11" height="11" fill-opacity="0.04"/>
<rect x="33" y="22" width="11" height="11" fill-opacity="0.05"/>
<rect x="44" y="22" width="11" height="11" fill-opacity="0.03"/>
<rect x="55" y="22" width="11" height="11" fill-opacity="0.04"/>
<rect x="66" y="22" width="11" height="11" fill-opacity="0.03"/>
<rect x="77" y="22" width="11" height="11" fill-opacity="0.06"/>
<rect x="88" y="22" width="11" height="11" fill-opacity="0.02"/>
<rect x="99" y="22" width="11" height="11" fill-opacity="0.02"/>
<rect x="110" y="22" width="11" height="11" fill-opacity="0.05"/>
<rect x="121" y="22" width="11" height="11" fill-opacity="0.03"/>
<rect x="132" y="22" width="11" height="11" fill-opacity="0.04"/>
<rect x="143" y="22" width="11" height="11" fill-opacity="0.04"/>
<rect x="165" y="22" width="11" height="11" fill-opacity="0.12"/>
<rect x="176" y="22" width="11" height="11" fill-opacity="0.02"/>
<rect x="187" y="22" width="11" height="11" fill-opacity="0.02"/>
<rect x="198" y="22" width="11" height="11" fill-opacity="0.03"/>
<rect x="209" y="22" width="11" height="11" fill-opacity="0.10"/>
<rect x="0" y="88" width="11" height="11" fill-opacity="0.10"/>
<rect x="11" y="88" width="11" height="11" fill-opacity="0.48"/>
<rect x="22" y="88" width="11" height="11" fill-opacity="0.18"/>
<rect x="33" y="88" width="11" height="11" fill-opacity="0.18"/>
<rect x="44" y="88" width="11" height="11" fill-opacity="0.28"/>
<rect x="55" y="88" width="11" height="11" fill-opacity="0.17"/>
<rect x="66" y="88" width="11" height="11" fill-opacity="0.33"/>
<rect x="77" y="88" width="11" height="11" fill-opacity="0.22"/>
<rect x="88" y="88" width="11" height="11" fill-opacity="0.22"/>
<rect x="99" y="88" width="11" height="11" fill-opacity="0.24"/>
<rect x="110" y="88" width="11" height="11" fill-opacity="0.27"/>
<rect x="121" y="88" width="11" height="11" fill-opacity="0.25"/>
<rect x="132" y="88" width="11" height="11" fill-opacity="0.14"/>
<rect x="143" y="88" width="11" height="11" fill-opacity="0.45"/>
<rect x="165" y="88" width="11" height="11" fill-opacity="0.34"/>
<rect x="176" y="88" width="11" height="11" fill-opacity="0.21"/>
<rect x="187" y="88" width="11" height="11" fill-opacity="0.32"/>
<rect x="198" y="88" width="11" height="11" fill-opacity="0.10"/>
<rect x="209" y="88" width="11" height="11" fill-opacity="0.22"/>
<rect x="0" y="99" width="11" height="11" fill-opacity="0.10"/>
<rect x="11" y="99" width="11" height="11" fill-opacity="0.40"/>
<rect x="22" y="99" width="11" height="11" fill-opacity="0.44"/>
<rect x="33" y="99" width="11" height="11" fill-opacity="0.46"/>
<rect x="44" y="99" width="11" height="11" fill-opacity="0.34"/>
<rect x="55" y="99" width="11" height="11" fill-opacity="0.32"/>
<rect x="66" y="99" width="11" height="11" fill-opacity="0.45"/>
<rect x="77" y="99" width="11" height="11" fill-opacity="0.43"/>
<rect x="88" y="99" width="11" height="11" fill-opacity="0.22"/>
<rect x="99" y="99" width="11" height="11" fill-opacity="0.24"/>
<rect x="110" y="99" width="11" height="11" fill-opacity="0.28"/>
<rect x="121" y="99" width="11" height="11" fill-opacity="0.38"/>
<rect x="132" y="99" width="11" height="11" fill-opacity="0.36"/>
<rect x="143" y="99" width="11" height="11" fill-opacity="0.44"/>
<rect x="154" y="99" width="11" height="11" fill-opacity="0.02"/>
<rect x="165" y="99" width="11" height="11" fill-opacity="0.40"/>
<rect x="176" y="99" width="11" height="11" fill-opacity="0.23"/>
<rect x="187" y="99" width="11" height="11" fill-opacity="0.38"/>
<rect x="198" y="99" width="11" height="11" fill-opacity="0.18"/>
<rect x="209" y="99" width="11" height="11" fill-opacity="0.24"/>
<rect x="165" y="110" width="11" height="11" fill-opacity="0.08"/>
<rect x="209" y="110" width="11" height="11" fill-opacity="0.08"/>
<rect x="11" y="165" width="11" height="11" fill-opacity="0.10"/>
<rect x="66" y="165" width="11" height="11" fill-opacity="0.01"/>
<rect x="99" y="165" width="11" height="11" fill-opacity="0.02"/>
<rect x="110" y="165" width="11" height="11" fill-opacity="0.07"/>
<rect x="143" y="165" width="11" height="11" fill-opacity="0.01"/>
<rect x="165" y="165" width="11" height="11" fill-opacity="0.04"/>
<rect x="209" y="165" width="11" height="11" fill-opacity="0.02"/>
<rect x="0" y="176" width="11" height="11" fill-opacity="0.08"/>
<rect x="11" y="176" width="11" height="11" fill-opacity="0.45"/>
<rect x="22" y="176" width="11" height="11" fill-opacity="0.20"/>
<rect x="33" y="176" width="11" height="11" fill-opacity="0.26"/>
<rect x="44" y="176" width="11" height="11" fill-opacity="0.32"/>
<rect x="55" y="176" width="11" height="11" fill-opacity="0.20"/>
<rect x="66" y="176" width="11" height="11" fill-opacity="0.38"/>
<rect x="77" y="176" width="11" height="11" fill-opacity="0.30"/>
<rect x="88" y="176" width="11" height="11" fill-opacity="0.24"/>
<rect x="99" y="176" width="11" height="11" fill-opacity="0.22"/>
<rect x="110" y="176" width="11" height="11" fill-opacity="0.16"/>
<rect x="121" y="176" width="11" height="11" fill-opacity="0.32"/>
<rect x="132" y="176" width="11" height="11" fill-opacity="0.16"/>
<rect x="143" y="176" width="11" height="11" fill-opacity="0.50"/>
<rect x="165" y="176" width="11" height="11" fill-opacity="0.35"/>
<rect x="176" y="176" width="11" height="11" fill-opacity="0.24"/>
<rect x="187" y="176" width="11" height="11" fill-opacity="0.38"/>
<rect x="198" y="176" width="11" height="11" fill-opacity="0.08"/>
<rect x="209" y="176" width="11" height="11" fill-opacity="0.20"/>
<rect x="0" y="187" width="11" height="11" fill-opacity="0.08"/>
<rect x="11" y="187" width="11" height="11" fill-opacity="0.27"/>
<rect x="22" y="187" width="11" height="11" fill-opacity="0.35"/>
<rect x="33" y="187" width="11" height="11" fill-opacity="0.35"/>
<rect x="44" y="187" width="11" height="11" fill-opacity="0.24"/>
<rect x="55" y="187" width="11" height="11" fill-opacity="0.24"/>
<rect x="66" y="187" width="11" height="11" fill-opacity="0.36"/>
<rect x="77" y="187" width="11" height="11" fill-opacity="0.32"/>
<rect x="88" y="187" width="11" height="11" fill-opacity="0.15"/>
<rect x="99" y="187" width="11" height="11" fill-opacity="0.15"/>
<rect x="110" y="187" width="11" height="11" fill-opacity="0.25"/>
<rect x="121" y="187" width="11" height="11" fill-opacity="0.27"/>
<rect x="132" y="187" width="11" height="11" fill-opacity="0.27"/>
<rect x="143" y="187" width="11" height="11" fill-opacity="0.30"/>
<rect x="154" y="187" width="11" height="11" fill-opacity="0.01"/>
<rect x="165" y="187" width="11" height="11" fill-opacity="0.35"/>
<rect x="176" y="187" width="11" height="11" fill-opacity="0.17"/>
<rect x="187" y="187" width="11" height="11" fill-opacity="0.27"/>
<rect x="198" y="187" width="11" height="11" fill-opacity="0.14"/>
<rect x="209" y="187" width="11" height="11" fill-opacity="0.21"/>
<rect x="165" y="198" width="11" height="11" fill-opacity="0.04"/>
<rect x="209" y="198" width="11" height="11" fill-opacity="0.04"/>
</svg>

<!-- red highlight 2 -->
<div class="hl" style="left:1083px;top:443px;width:499px;height:368px"></div>

<!-- horizontal scrollbar -->
<div class="a" style="left:203px;top:1658px;width:2780px;height:30px;background:#fafafa;border-top:2px solid #e9e9e9;border-bottom:2px solid #e9e9e9"></div>
<div class="a" style="left:209px;top:1666px;width:1757px;height:16px;border-radius:8px;background:#c1c1c1"></div>

<!-- window corners -->
<svg style="left:0;top:1683px" width="40" height="40" viewBox="0 0 40 40"><path d="M0 23.200A37 37 0 0 0 31 40H0z" fill="#8e8e8e"/><path d="M0 23.200A37 37 0 0 0 31 40" fill="none" stroke="#2a2a2a" stroke-width="1.500"/></svg>
<svg style="left:2967px;top:1673px" width="50" height="50" viewBox="0 0 50 50"><path d="M50 13A37 37 0 0 1 13 50H50z" fill="#a6a6a6"/><path d="M50 13A37 37 0 0 1 13 50" fill="none" stroke="#2a2a2a" stroke-width="1.500"/></svg>

</body>
</html>
